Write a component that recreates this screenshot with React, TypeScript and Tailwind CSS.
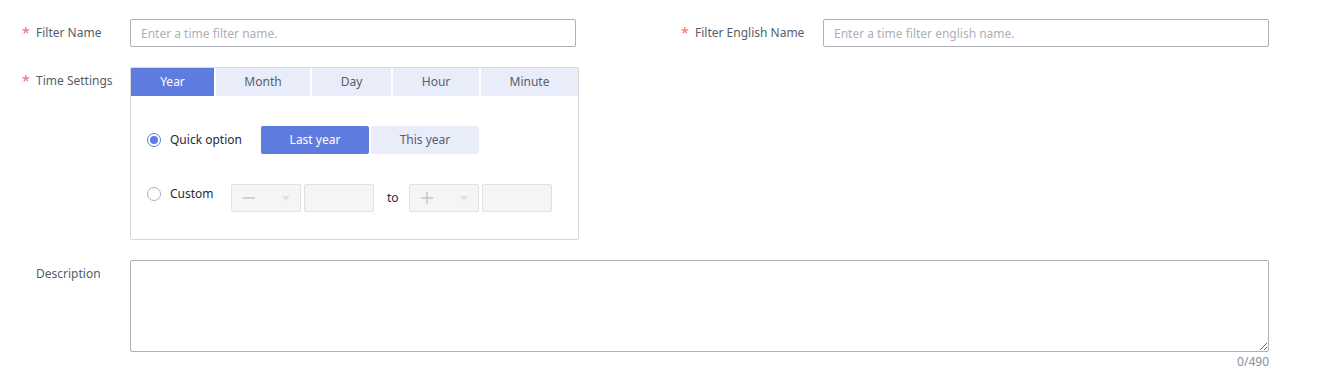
import { useState } from 'react';

const TABS = [
  { key: 'year', label: 'Year', width: 'w-[83px]' },
  { key: 'month', label: 'Month', width: 'w-[94px]' },
  { key: 'day', label: 'Day', width: 'w-[79px]' },
  { key: 'hour', label: 'Hour', width: 'w-[86px]' },
  { key: 'minute', label: 'Minute', width: 'flex-1' },
];

function FieldLabel({ text, required = false, width }: { text: string; required?: boolean; width: string }) {
  return (
    <div className={`${width} shrink-0 h-[28px] flex items-center pl-[22px] text-[12px] text-[#575d6c]`}>
      <span className="w-[14px] text-[#f66f6a] text-[14px] leading-none">{required ? '*' : ''}</span>
      <span>{text}</span>
    </div>
  );
}

function Radio({ checked, label }: { checked: boolean; label: string }) {
  return (
    <div className="flex items-center h-[20px] w-[100px] shrink-0">
      <span
        className={`w-[14px] h-[14px] rounded-full border flex items-center justify-center ${
          checked ? 'border-[#5e7ce0]' : 'border-[#adb0b8]'
        }`}
      >
        {checked && <span className="w-[8px] h-[8px] rounded-full bg-[#5e7ce0]" />}
      </span>
      <span className="ml-[9px] text-[12px] text-[#252b3a]">{label}</span>
    </div>
  );
}

function SignSelect({ sign }: { sign: 'minus' | 'plus' }) {
  return (
    <div className="w-[70px] h-[28px] rounded-[2px] border border-[#dfe1e6] bg-[#f5f5f6] flex items-center justify-between px-[10px]">
      <svg width="14" height="14" viewBox="0 0 14 14">
        <path d="M1 7h12" stroke="#c2c4c9" strokeWidth="1.5" />
        {sign === 'plus' && <path d="M7 1v12" stroke="#c2c4c9" strokeWidth="1.5" />}
      </svg>
      <svg width="8" height="5" viewBox="0 0 8 5">
        <path d="M0 0h8L4 5z" fill="#dfe1e6" />
      </svg>
    </div>
  );
}

function DisabledInput() {
  return <div className="w-[70px] h-[28px] rounded-[2px] border border-[#dfe1e6] bg-[#f5f5f6]" />;
}

export default function App() {
  const [tab, setTab] = useState('year');
  const [quick, setQuick] = useState('last');

  return (
    <div className="w-[1328px] h-[388px] bg-white pt-[19px] font-['Noto_Sans','Open_Sans',sans-serif]">
      {/* Names */}
      <div className="flex">
        <div className="flex w-[576px]">
          <FieldLabel text="Filter Name" required width="w-[130px]" />
          <input
            className="w-[446px] h-[28px] border border-[#adb0b8] rounded-[2px] px-[10px] text-[12px] outline-none placeholder:text-[#adb0b8]"
            placeholder="Enter a time filter name."
          />
        </div>
        <div className="flex ml-[83px]">
          <FieldLabel text="Filter English Name" required width="w-[164px]" />
          <input
            className="w-[446px] h-[28px] border border-[#adb0b8] rounded-[2px] px-[10px] text-[12px] outline-none placeholder:text-[#adb0b8]"
            placeholder="Enter a time filter english name."
          />
        </div>
      </div>

      {/* Time settings */}
      <div className="flex mt-[20px]">
        <FieldLabel text="Time Settings" required width="w-[130px]" />
        <div className="w-[449px] h-[173px] border border-[#d7d8da] rounded-[2px]">
          <div className="flex gap-[2px] h-[28px]">
            {TABS.map((t) => (
              <button
                key={t.key}
                onClick={() => setTab(t.key)}
                className={`${t.width} h-full text-[12px] ${
                  tab === t.key ? 'bg-[#5e7ce0] text-white' : 'bg-[#e9edfa] text-[#575d6c]'
                }`}
              >
                {t.label}
              </button>
            ))}
          </div>
          <div className="pl-[16px] pt-[30px]">
            <div className="flex items-center">
              <Radio checked label="Quick option" />
              <div className="flex gap-[2px] ml-[14px]">
                <button
                  onClick={() => setQuick('last')}
                  className={`w-[108px] h-[28px] rounded-[2px] text-[12px] ${
                    quick === 'last' ? 'bg-[#5e7ce0] text-white' : 'bg-[#e9edfa] text-[#575d6c]'
                  }`}
                >
                  Last year
                </button>
                <button
                  onClick={() => setQuick('this')}
                  className={`w-[108px] h-[28px] rounded-[2px] text-[12px] ${
                    quick === 'this' ? 'bg-[#5e7ce0] text-white' : 'bg-[#e9edfa] text-[#575d6c]'
                  }`}
                >
                  This year
                </button>
              </div>
            </div>
            <div className="flex items-start mt-[30px]">
              <div className="w-[84px] shrink-0">
                <Radio checked={false} label="Custom" />
              </div>
              <div className="flex items-center gap-[3px]">
                <SignSelect sign="minus" />
                <DisabledInput />
              </div>
              <span className="h-[28px] flex items-center ml-[13px] mr-[10px] text-[12px] text-[#252b3a]">to</span>
              <div className="flex items-center gap-[3px]">
                <SignSelect sign="plus" />
                <DisabledInput />
              </div>
            </div>
          </div>
        </div>
      </div>

      {/* Description */}
      <div className="flex mt-[20px]">
        <FieldLabel text="Description" width="w-[130px]" />
        <div className="w-[1139px]">
          <textarea className="block w-full h-[92px] border border-[#adb0b8] rounded-[2px] px-[10px] py-[4px] text-[12px] outline-none resize-y" />
          <div className="text-right text-[12px] text-[#8a8e99] leading-[20px]">0/490</div>
        </div>
      </div>
    </div>
  );
}
